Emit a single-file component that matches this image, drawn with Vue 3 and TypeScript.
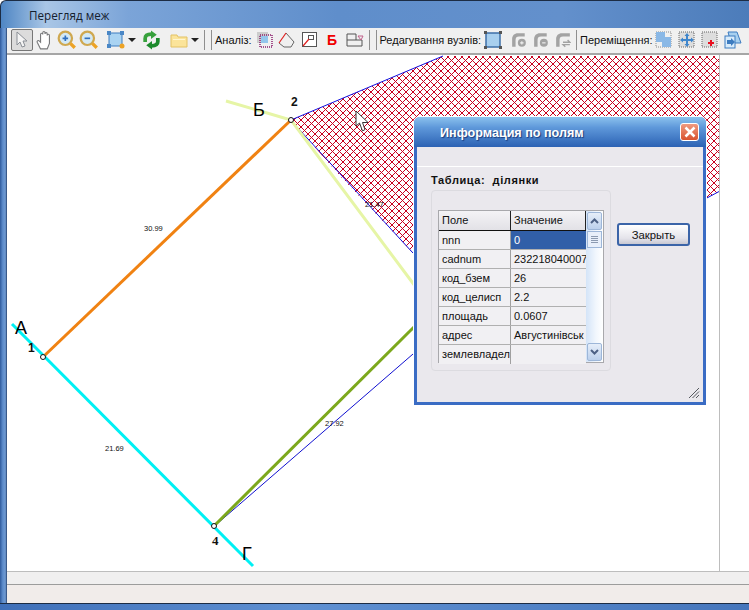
<script setup lang="ts">
interface FieldRow {
  name: string;
  value: string;
  selected?: boolean;
}

const rows: FieldRow[] = [
  { name: "nnn", value: "0", selected: true },
  { name: "cadnum", value: "232218040007" },
  { name: "код_бзем", value: "26" },
  { name: "код_целисп", value: "2.2" },
  { name: "площадь", value: "0.0607" },
  { name: "адрес", value: "Августинівськ" },
  { name: "землевладел", value: "" },
];

interface MapLabel {
  x: number;
  y: number;
  text: string;
}

const lengths: MapLabel[] = [
  { x: 144, y: 230, text: "30.99" },
  { x: 105, y: 450, text: "21.69" },
  { x: 325, y: 425, text: "27.92" },
  { x: 365, y: 206, text: "21.47" },
];
</script>

<template>
  <div class="window">
    <div class="titlebar">Перегляд меж</div>
    <div class="main">
      <div class="left-frame"></div>
      <div class="content">
        <div class="toolbar">
          <button class="tb active">
            <svg width="16" height="18" viewBox="0 0 16 18"><path d="M3 1v13l3-3 2 5 3-1-2-5h4z" fill="#f4f4f4" stroke="#8a8f96" /></svg>
          </button>
          <button class="tb hand">
            <svg width="20" height="20" viewBox="0 0 18 18"><path d="M5 17l-3-6c-.6-1.400 1-2 2-1l1 1V4c0-1.500 2-1.500 2 0V2.500c0-1.500 2-1.500 2 0V3.500c0-1.500 2-1.500 2 0V5c0-1.500 2-1.500 2 0v7l-2 5z" fill="#fff" stroke="#77787a" /></svg>
          </button>
          <button class="tb">
            <svg width="20" height="20" viewBox="0 0 18 18"><circle cx="7.500" cy="7.500" r="6" fill="#d3e9f5" stroke="#cfa850" stroke-width="2" /><path d="M5 7.500h5M7.500 5v5" stroke="#2f6fc0" stroke-width="1.500" /><path d="M12 12l4 4" stroke="#eda326" stroke-width="3" /></svg>
          </button>
          <button class="tb">
            <svg width="20" height="20" viewBox="0 0 18 18"><circle cx="7.500" cy="7.500" r="6" fill="#d3e9f5" stroke="#cfa850" stroke-width="2" /><path d="M5 7.500h5" stroke="#2f6fc0" stroke-width="1.500" /><path d="M12 12l4 4" stroke="#eda326" stroke-width="3" /></svg>
          </button>
          <button class="tb extent">
            <svg width="18" height="18" viewBox="0 0 18 18"><rect x="2" y="2" width="13" height="13" fill="#a9d3f2" stroke="#3d7cc0" /><path d="M0 0h4v4H0zM13 0h4v4h-4zM0 13h4v4H0z" fill="#4a87c6" /><circle cx="15" cy="15" r="2.500" fill="#eda326" /></svg>
          </button>
          <span class="caret"></span>
          <button class="tb refresh">
            <svg width="19" height="20" viewBox="0 0 18 18">
              <path d="M3 11V7.500C3 5 5 3.500 9 3.500" fill="none" stroke="#37a13c" stroke-width="3.500" />
              <path d="M8.500 0L14 4L8.500 8z" fill="#37a13c" />
              <path d="M15 7v3.500C15 13 13 14.500 9 14.500" fill="none" stroke="#1c8a2c" stroke-width="3.500" />
              <path d="M9.500 18L4 14L9.500 10z" fill="#1c8a2c" />
            </svg>
          </button>
          <button class="tb folder">
            <svg width="18" height="16" viewBox="0 0 18 16"><path d="M1 3h6l1 2h9v10H1z" fill="#fbe49a" stroke="#e3c264" /><path d="M3 7h12v1H3z" fill="#fff6cf" /></svg>
          </button>
          <span class="caret"></span>
          <span class="sep first"></span>
          <span class="sep"></span>
          <span class="tb-label">Аналіз:</span>
          <div class="group analysis">
            <button class="tb">
              <svg width="18" height="18" viewBox="0 0 18 18"><rect x="1" y="1" width="11" height="11" fill="#ccc" /><rect x="4" y="4" width="12" height="12" fill="none" stroke="#8c1f6d" stroke-dasharray="1 1" stroke-width="1.500" /><rect x="5" y="5" width="7" height="7" fill="#94c6ec" /></svg>
            </button>
            <button class="tb">
              <svg width="18" height="18" viewBox="0 0 18 18"><path d="M8 2l8 9-3 5H6l-5-4" fill="none" stroke="#666" /><path d="M8 2L1 12" stroke="#e02020" stroke-width="1.200" fill="none" /></svg>
            </button>
            <button class="tb">
              <svg width="18" height="18" viewBox="0 0 18 18"><rect x="1.500" y="1.500" width="14" height="14" fill="#fff" stroke="#555" /><rect x="7.500" y="4.500" width="5" height="4" fill="#fff" stroke="#555" /><path d="M2 15l6-7" stroke="#e02020" stroke-width="1.200" /></svg>
            </button>
            <span class="tb red-b">Б</span>
            <button class="tb">
              <svg width="18" height="18" viewBox="0 0 18 18"><path d="M1 3h9v6h6v6H1zM1 9h9" fill="none" stroke="#555" /><path d="M12 5h5l-2 4z" fill="none" stroke="#c0608a" /></svg>
            </button>
          </div>
          <span class="sep second"></span>
          <span class="sep"></span>
          <span class="tb-label">Редагування вузлів:</span>
          <div class="group nodes">
            <button class="tb node-first">
              <svg width="18" height="18" viewBox="0 0 18 18"><rect x="2" y="2" width="14" height="14" fill="#a8cfee" stroke="#3d6fa8" stroke-width="1.500" /><path d="M0 0h3v3H0zM15 0h3v3h-3zM0 15h3v3H0zM15 15h3v3h-3z" fill="#555" /></svg>
            </button>
            <button class="tb muted">
              <svg width="16" height="16" viewBox="0 0 14 14"><path d="M1 13V6c0-3 2-5 5-5h6v3H7C5 4 4 5 4 7v6z" fill="#a3a3a3" /><circle cx="9.500" cy="9.500" r="3.500" fill="#a3a3a3" /><path d="M8 9.500h3M9.500 8v3" stroke="#f0f0f0" /></svg>
            </button>
            <button class="tb muted">
              <svg width="16" height="16" viewBox="0 0 14 14"><path d="M1 13V6c0-3 2-5 5-5h6v3H7C5 4 4 5 4 7v6z" fill="#a3a3a3" /><circle cx="9.500" cy="9.500" r="3.500" fill="#a3a3a3" /><path d="M8 9.500h3" stroke="#f0f0f0" /></svg>
            </button>
            <button class="tb muted">
              <svg width="16" height="16" viewBox="0 0 14 14"><path d="M1 13V6c0-3 2-5 5-5h7v3H7C5 4 4 5 4 7v6z" fill="#a3a3a3" /><path d="M7 9h6l-2-2M13 11H7l2 2" fill="none" stroke="#a3a3a3" stroke-width="1.200" /></svg>
            </button>
          </div>
          <span class="sep third"></span>
          <span class="tb-label">Переміщення:</span>
          <div class="group moves">
            <button class="tb">
              <svg width="18" height="18" viewBox="0 0 18 18"><rect x="1" y="1" width="15" height="15" fill="none" stroke="#888" stroke-dasharray="1 1" /><path d="M1 1h9v5h6v10H7v-5H1z" fill="#8ab8e6" /></svg>
            </button>
            <button class="tb">
              <svg width="18" height="18" viewBox="0 0 18 18"><rect x="1" y="1" width="15" height="15" fill="#ddd" stroke="#666" stroke-dasharray="1 1" /><path d="M9 2l2.500 3H10v3h3V6.500L16 9l-3 2.500V10h-3v3h1.500L9 16l-2.500-3H8v-3H5v1.500L2 9l3-2.500V8h3V5H6.500z" fill="#3f86cc" /></svg>
            </button>
            <button class="tb">
              <svg width="18" height="18" viewBox="0 0 18 18"><rect x="1" y="1" width="15" height="15" fill="#ddd" stroke="#666" stroke-dasharray="1 1" /><path d="M10 9v6M7 12h6" stroke="#e81020" stroke-width="2" /></svg>
            </button>
            <button class="tb">
              <svg width="18" height="18" viewBox="0 0 18 18"><path d="M4 1h9l4 11H7z" fill="#a7d0f0" stroke="#3d7cc0" /><rect x="1" y="5" width="10" height="12" fill="#d8ebfa" stroke="#3d7cc0" /><path d="M3 9h4V7l4 4-4 4v-2H3z" fill="#3d7cc0" /></svg>
            </button>
          </div>
        </div>

        <div class="canvas">
          <svg class="map" width="742" height="517" viewBox="7 54 742 517">
            <defs>
              <pattern id="hatch" width="7" height="7" patternUnits="userSpaceOnUse">
                <path d="M0 0l7 7M7 0L0 7" stroke="#c8001e" stroke-width="1" fill="none" />
              </pattern>
            </defs>
            <path d="M291 119L443 55H720V190L413 352L413 252L340 175Z" fill="url(#hatch)" />
            <path d="M291 119L443 55" stroke="#1010e0" fill="none" />
            <path d="M296 125L413 252" stroke="#1010e0" fill="none" />
            <path d="M720 190L705 198" stroke="#1010e0" fill="none" />
            <path d="M226 100L291 119L415 285" stroke="#e6f5a6" stroke-width="3" fill="none" />
            <path d="M218 522L413 353" stroke="#1010d0" fill="none" />
            <path d="M214 525L415 325" stroke="#7ca81c" stroke-width="3" fill="none" />
            <path d="M43 356L291 119" stroke="#f08212" stroke-width="3" fill="none" />
            <path d="M12 323L253 565" stroke="#00f0f4" stroke-width="3" fill="none" />
            <circle cx="291" cy="119" r="2.500" fill="#fff" stroke="#111" />
            <circle cx="43" cy="356" r="2.500" fill="#fff" stroke="#111" />
            <circle cx="214" cy="525" r="2.500" fill="#fff" stroke="#111" />
            <text v-for="l in lengths" :key="l.text" :x="l.x" :y="l.y" class="len">{{ l.text }}</text>
            <text x="291" y="105" class="num">2</text>
            <text x="28" y="351" class="num">1</text>
            <text x="212" y="544" class="num serif">4</text>
            <text x="253" y="115" class="letter">Б</text>
            <text x="15" y="333" class="letter">А</text>
            <text x="242" y="559" class="letter">Г</text>
            <path d="M356 110V125L359.500 122L362.500 130L365 128.500L362.500 121.500H368Z" fill="#fff" stroke="#333" />
          </svg>
          <div class="right-edge"></div>

          <div class="dialog">
            <div class="dialog-title">
              <span>Информация по полям</span>
              <div class="close">
                <svg width="12" height="12" viewBox="0 0 12 12"><path d="M1.500 1.500l9 9M10.500 1.500l-9 9" stroke="#fff" stroke-width="2.500" /></svg>
              </div>
            </div>
            <div class="dialog-body">
              <div class="divider"></div>
              <div class="table-name">Таблица:&nbsp; ділянки</div>
              <div class="dialog-row">
                <div class="panel">
                  <div class="grid">
                    <div class="grid-cols">
                      <div class="grid-head">
                        <div class="cell name">Поле</div>
                        <div class="cell value">Значение</div>
                      </div>
                      <div v-for="row in rows" :key="row.name" class="grid-row">
                        <div class="cell name">{{ row.name }}</div>
                        <div class="cell value" :class="{ selected: row.selected }">{{ row.value }}</div>
                      </div>
                    </div>
                    <div class="scrollbar">
                      <div class="scroll-btn">
                        <svg width="9" height="6" viewBox="0 0 9 6"><path d="M1 5l3.500-3.500L8 5" fill="none" stroke="#4d6185" stroke-width="2" /></svg>
                      </div>
                      <div class="scroll-thumb">
                        <span></span><span></span><span></span><span></span>
                      </div>
                      <div class="scroll-space"></div>
                      <div class="scroll-btn">
                        <svg width="9" height="6" viewBox="0 0 9 6"><path d="M1 1l3.500 3.500L8 1" fill="none" stroke="#4d6185" stroke-width="2" /></svg>
                      </div>
                    </div>
                  </div>
                </div>
                <button class="close-btn">Закрыть</button>
              </div>
              <svg class="grip" width="12" height="12" viewBox="0 0 12 12"><path d="M11 1L1 11M11 4.500L4.500 11M11 8L8 11" stroke="#55585e" fill="none" /></svg>
            </div>
          </div>
        </div>

        <div class="hbar"></div>
        <div class="statusbar"></div>
      </div>
    </div>
    <div class="bottom-frame"></div>
  </div>
</template>

<style scoped>
.window {
  width: 749px;
  height: 610px;
  display: flex;
  flex-direction: column;
  overflow: hidden;
  font-family: "Liberation Sans", Arial, sans-serif;
  color: #111;
  background: #fff;
}

.titlebar {
  height: 28px;
  box-sizing: border-box;
  padding: 4px 0 0 28px;
  font-family: "Open Sans", sans-serif;
  font-size: 11.700px;
  line-height: 20px;
  color: #15202e;
  border-top: 1px solid #1c2c44;
  border-left: 1px solid #1c2c44;
  border-top-left-radius: 6px;
  background: linear-gradient(90deg, #4f86c4 0, #a9c6e6 6%, #7ba4d8 17%, #5f8ecb 45%, #6390cc 75%, #4c7cba 100%);
}

.main {
  flex: 1;
  display: flex;
  min-height: 0;
}

.left-frame {
  width: 7px;
  background: linear-gradient(90deg, #2f5a9c 0, #5d8ccb 40%, #6f9ad2 75%, #24406e 100%);
}

.content {
  flex: 1;
  display: flex;
  flex-direction: column;
  min-width: 0;
}

.toolbar {
  height: 27px;
  box-sizing: border-box;
  display: flex;
  align-items: center;
  padding: 0 0 1px 4px;
  background: #f0f0f0;
  border-bottom: 2px solid #a6a6a6;
  font-size: 11px;
}

.group {
  display: flex;
  align-items: center;
}

.tb {
  width: 22px;
  height: 22px;
  padding: 0;
  flex: none;
  display: flex;
  align-items: center;
  justify-content: center;
  border: none;
  background: none;
}

.tb.active {
  box-sizing: border-box;
  border: 1px solid #777;
  border-radius: 2px;
  background: #dcdcdc;
  margin-right: 1px;
}

.extent {
  margin-left: 5px;
}

.refresh {
  margin-left: 1px;
}

.folder {
  margin-left: 6px;
}

.caret {
  width: 0;
  height: 0;
  margin: 0 3px 0 1px;
  border-left: 4px solid transparent;
  border-right: 4px solid transparent;
  border-top: 4px solid #222;
}

.sep {
  width: 1px;
  height: 20px;
  margin: 0 3px;
  background: #8f8f8f;
  flex: none;
}

.sep.first {
  margin-left: 2px;
}

.sep.second {
  margin-left: 3px;
}

.sep.third {
  margin-left: 2px;
}

.tb-label {
  white-space: nowrap;
  flex: none;
}

.analysis {
  margin-left: 2px;
  gap: 0.500px;
}

.nodes {
  margin-left: 1px;
}

.node-first {
  margin-right: 4px;
}

.moves {
  gap: 1px;
}

.red-b {
  font-size: 14px;
  font-weight: 700;
  color: #f00000;
}

.canvas {
  height: 516px;
  position: relative;
  background: #fff;
}

.map {
  display: block;
}

.len {
  font-size: 7.500px;
  fill: #111;
}

.num {
  font-size: 12px;
  font-weight: 700;
  fill: #111;
}

.num.serif {
  font-family: "Liberation Serif", serif;
  font-size: 13px;
}

.letter {
  font-size: 18px;
  fill: #000;
}

.right-edge {
  position: absolute;
  left: 712px;
  top: 0;
  bottom: 0;
  width: 1px;
  background: #bdbdbd;
}

.dialog {
  position: absolute;
  left: 407px;
  top: 62px;
  width: 292px;
  height: 288px;
  box-sizing: border-box;
  display: flex;
  flex-direction: column;
  border: 3px solid #3a6cc4;
  border-top: none;
  border-radius: 6px 6px 0 0;
  background: #eae8ed;
  box-shadow: 0 0 0 1px #fff;
}

.dialog-title {
  height: 30px;
  margin: 0 -3px;
  flex: none;
  display: flex;
  align-items: center;
  justify-content: space-between;
  padding: 1px 7px 0 26px;
  box-sizing: border-box;
  border-radius: 6px 6px 0 0;
  background: linear-gradient(180deg, #8cc2ee 0, #5e98da 35%, #2c62b4 100%);
  color: #fff;
  font-size: 12.600px;
  font-weight: 700;
  text-shadow: 1px 1px 1px #1c3c7c;
}

.close {
  width: 19px;
  height: 18px;
  margin-top: -1px;
  display: flex;
  align-items: center;
  justify-content: center;
  border: 1px solid #fff;
  border-radius: 3px;
  box-sizing: border-box;
  background: linear-gradient(180deg, #ef9a80, #d9532f);
}

.dialog-body {
  flex: 1;
  position: relative;
  padding: 19px 0 0 14px;
}

.divider {
  height: 1px;
  margin: 0 0 6px -14px;
  background: #fff;
}

.table-name {
  height: 14px;
  font-size: 11px;
  font-weight: 700;
  letter-spacing: 0.600px;
  line-height: 14px;
}

.dialog-row {
  display: flex;
  align-items: flex-start;
  margin-top: 3px;
}

.panel {
  width: 180px;
  height: 181px;
  box-sizing: border-box;
  padding: 19px 0 0 6px;
  border: 1px solid #dcdbe0;
  border-radius: 4px;
}

.grid {
  width: 166px;
  height: 153px;
  box-sizing: border-box;
  display: flex;
  border: 1px solid #a8a8ac;
  background: #fff;
  font-size: 11px;
}

.grid-cols {
  width: 147px;
  flex: none;
}

.grid-head,
.grid-row {
  display: flex;
  height: 19px;
}

.grid-head {
  height: 20px;
  border-bottom: 1px solid #111;
  box-sizing: border-box;
  background: linear-gradient(180deg, #f4f3f6, #e2e1e6);
}

.grid-row {
  box-sizing: border-box;
  border-bottom: 1px solid #b0b0b0;
  background: #f1f0f3;
}

.grid-row:last-child {
  border-bottom: none;
}

.cell {
  box-sizing: border-box;
  padding: 0 0 0 3px;
  line-height: 18px;
  white-space: nowrap;
  overflow: hidden;
}

.cell.name {
  width: 72px;
  border-right: 1px solid #a0a0a0;
}

.grid-head .cell.name {
  border-right: 1px solid #222;
}

.cell.value {
  width: 75px;
}

.grid-head .cell.value {
  border-right: 1px solid #222;
}

.cell.selected {
  background: #315fa8;
  color: #fff;
}

.scrollbar {
  flex: 1;
  display: flex;
  flex-direction: column;
  align-items: center;
  padding: 1px 0;
  background: linear-gradient(90deg, #d4e4f8, #f2f7fd 60%, #fff);
}

.scroll-btn {
  width: 15px;
  height: 18px;
  flex: none;
  display: flex;
  align-items: center;
  justify-content: center;
  box-sizing: border-box;
  border: 1px solid #9db6d8;
  border-radius: 2px;
  background: linear-gradient(180deg, #e6eef9, #bcd0ec);
}

.scroll-thumb {
  width: 15px;
  height: 17px;
  flex: none;
  box-sizing: border-box;
  display: flex;
  flex-direction: column;
  align-items: center;
  justify-content: center;
  gap: 1px;
  margin-top: 1px;
  border: 1px solid #9db6d8;
  background: #e8effa;
}

.scroll-thumb span {
  width: 7px;
  height: 1px;
  background: #8c9ab0;
}

.scroll-space {
  flex: 1;
}

.close-btn {
  width: 73px;
  height: 23px;
  margin: 33px 0 0 6px;
  padding: 0;
  box-sizing: border-box;
  border: 2px solid #3b64a8;
  border-radius: 3px;
  background: linear-gradient(180deg, #fff, #e4e3ea 70%, #c8c8d2);
  font-family: "Liberation Sans", Arial, sans-serif;
  font-size: 11.300px;
  color: #111;
}

.grip {
  position: absolute;
  right: 3px;
  bottom: 3px;
}

.hbar {
  height: 14px;
  background: #f0efef;
  border-bottom: 1px solid #9c9c9c;
  box-sizing: border-box;
  border-top: 1px solid #bdbdbd;
}

.statusbar {
  height: 18px;
  background: #f1ecea;
}

.bottom-frame {
  flex: none;
  height: 7px;
  border-top: 1px solid #1c2c44;
  box-sizing: border-box;
  background: linear-gradient(90deg, #3f6fb8, #5f90d2 40%, #4676bc);
}
</style>
